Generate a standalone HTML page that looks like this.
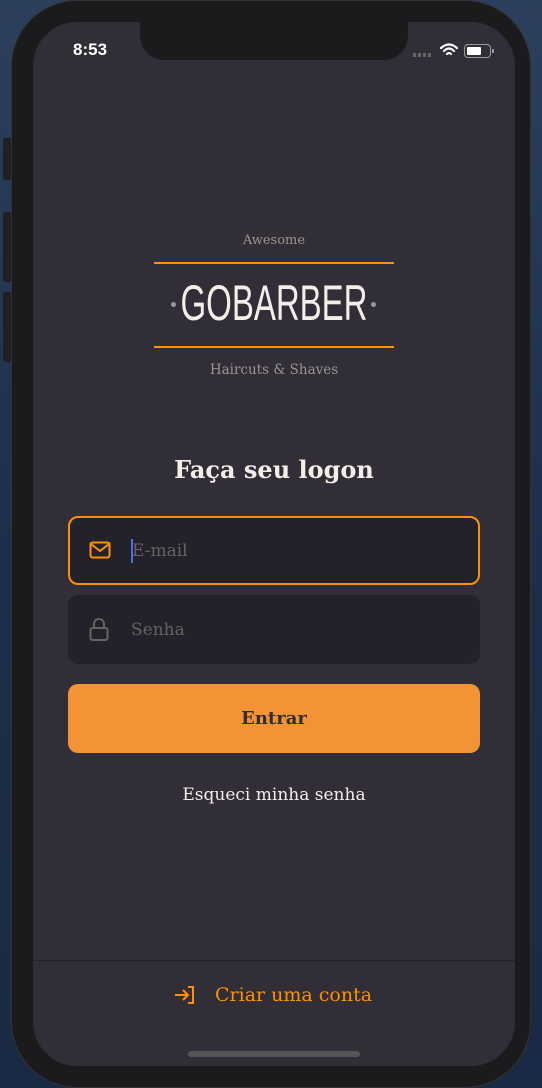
<!DOCTYPE html>
<html><head><meta charset="utf-8"><style>
*{margin:0;padding:0;box-sizing:border-box}
body{width:542px;height:1088px;overflow:hidden;background:linear-gradient(180deg,#2c3f5c,#1d2f4a 50%,#1a2a44);position:relative;font-family:"DejaVu Serif","Liberation Serif",serif}
.frame{position:absolute;left:11px;top:0;width:520px;height:1088px;background:#1b1b1d;border-radius:66px;border:1px solid #333}
.btn{position:absolute;left:3px;width:9px;background:#202022;border-radius:2px}
.screen{position:absolute;left:33px;top:22px;width:482px;height:1044px;background:#312e38;border-radius:44px;overflow:hidden}
.notch{position:absolute;left:107px;top:0;width:268px;height:38px;background:#1b1b1d;border-radius:0 0 24px 24px}
.abs{position:absolute}
.c{text-align:center;width:482px;left:0}
.inp{position:absolute;left:35px;width:412px;height:69px;background:#232129;border-radius:10px}
</style></head><body>
<div class="btn" style="top:138px;height:42px"></div>
<div class="btn" style="top:212px;height:70px"></div>
<div class="btn" style="top:292px;height:70px"></div>
<div class="frame"></div>
<div class="screen">
<div class="notch"></div>
<div class="abs" style="left:40px;top:18px;color:#fff;font:600 17px 'Liberation Sans',sans-serif">8:53</div>
<div class="abs" style="left:380px;top:31px;width:20px;height:4px;background:repeating-linear-gradient(90deg,#666 0 3px,transparent 3px 5px)"></div>
<svg class="abs" style="left:407px;top:21px" width="18" height="14" viewBox="0 0 18 14"><path d="M1 5Q9-2 17 5M4 8Q9 3 14 8M7 11Q9 9 11 11" stroke="#fff" stroke-width="2.2" fill="none" stroke-linecap="round"/></svg>
<div class="abs" style="left:431px;top:22px;width:27px;height:14px;border:1.5px solid #999;border-radius:4px"><div style="margin:1.5px;width:14px;height:8px;background:#fff;border-radius:1px"></div></div>
<div class="abs" style="left:459px;top:27px;width:2px;height:4px;background:#999"></div>

<div class="abs c" style="top:211px;color:#999591;font-size:13px">Awesome</div>
<div class="abs" style="left:121px;top:240px;width:240px;height:2px;background:#ff9000"></div>
<div class="abs" style="left:138px;top:280px;width:5px;height:5px;border-radius:50%;background:#999"></div>
<div class="abs" style="left:338px;top:280px;width:5px;height:5px;border-radius:50%;background:#999"></div>
<div class="abs c" style="top:252px;color:#f4ede8;font:400 50px 'Liberation Sans Narrow','Liberation Sans',sans-serif;transform:scaleX(.66);letter-spacing:0">GOBARBER</div>
<div class="abs" style="left:121px;top:324px;width:240px;height:2px;background:#ff9000"></div>
<div class="abs c" style="top:340px;color:#999591;font-size:13.5px">Haircuts &amp; Shaves</div>

<div class="abs c" style="top:433px;color:#f4ede8;font-size:24px;font-weight:bold">Faça seu logon</div>

<div class="inp" style="top:494px;border:2px solid #ff9000">
<svg class="abs" style="left:19px;top:23px" width="22" height="18" viewBox="0 0 22 18"><rect x="1.5" y="1.5" width="19" height="15" rx="2" stroke="#ff9000" stroke-width="2" fill="none"/><path d="M2 3l9 7 9-7" stroke="#ff9000" stroke-width="2" fill="none"/></svg>
<div class="abs" style="left:61px;top:21px;width:2px;height:24px;background:#4a6cf0"></div>
<div class="abs" style="left:62px;top:23px;color:#666360;font-size:17px">E-mail</div>
</div>
<div class="inp" style="top:573px">
<svg class="abs" style="left:21px;top:23px" width="22" height="24" viewBox="0 0 22 24"><rect x="1.5" y="10" width="17" height="12" rx="2" stroke="#666360" stroke-width="2" fill="none"/><path d="M5 10V6a5 5 0 0 1 10 0v4" stroke="#666360" stroke-width="2" fill="none"/></svg>
<div class="abs" style="left:63px;top:25px;color:#666360;font-size:17px">Senha</div>
</div>
<div class="abs" style="left:35px;top:662px;width:412px;height:69px;background:#f29435;border-radius:10px;text-align:center;line-height:69px;color:#312e38;font-size:18px;font-weight:bold">Entrar</div>
<div class="abs c" style="top:763px;color:#f4ede8;font-size:17px">Esqueci minha senha</div>

<div class="abs" style="left:0;top:938px;width:482px;height:1px;background:#232129"></div>
<svg class="abs" style="left:141px;top:963px" width="22" height="20" viewBox="0 0 22 20"><path d="M1 10h12M9 5l5 5-5 5M14 2h5v16h-5" stroke="#ff9000" stroke-width="2" fill="none"/></svg>
<div class="abs" style="left:182px;top:962px;color:#ff9000;font-size:19px">Criar uma conta</div>
<div class="abs" style="left:155px;top:1029px;width:172px;height:6px;background:#555;border-radius:3px"></div>
</div>
</body></html>
